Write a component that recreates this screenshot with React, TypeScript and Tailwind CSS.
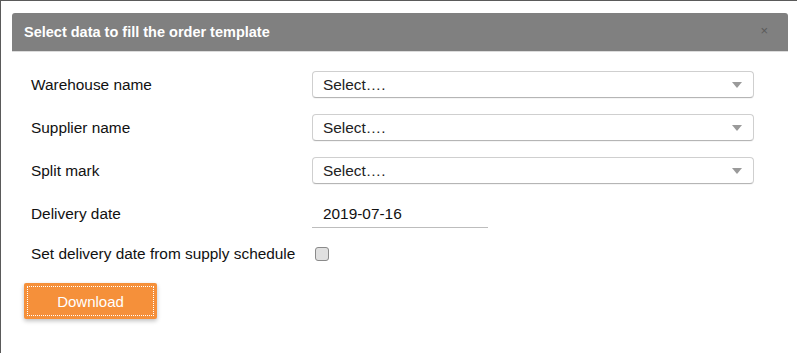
import React from "react";

function Caret() {
  return (
    <svg width="10" height="6" viewBox="0 0 10 6" className="block">
      <path d="M0 0 L10 0 L5 6 Z" fill="#9a9a9a" />
    </svg>
  );
}

function SelectBox() {
  return (
    <div className="flex items-center justify-between h-[27px] w-[442px] rounded-[4px] border border-[#cfcfcf] border-b-[#b5b5b5] bg-white pl-[10px] pr-[11px] shadow-[0_1px_0_rgba(0,0,0,0.04)]">
      <span className="text-[15.4px] text-[#222]">Select….</span>
      <Caret />
    </div>
  );
}

export default function App() {
  const labels = ["Warehouse name", "Supplier name", "Split mark"];
  return (
    <div
      className="w-[800px] h-[353px] bg-white relative overflow-hidden"
      style={{ fontFamily: '"Liberation Sans", Arial, sans-serif' }}
    >
      <div className="absolute left-0 top-0 w-[797px] h-px bg-[#5a5a5a]" />
      <div className="absolute left-0 top-0 w-px h-[353px] bg-[#5a5a5a]" />
      <div className="pt-[13px] pl-[12px] pr-[12px]">
        <div className="h-[39px] bg-[#808080] rounded-t-[3px] border-b border-[#dcdcdc] flex items-center justify-between pl-[12px] pr-[20px]">
          <span className="text-white font-bold text-[14.5px] pt-[2px]">Select data to fill the order template</span>
          <span className="text-[#5a5a5a] text-[13px] leading-none -mt-[3px]">×</span>
        </div>
        <div className="pl-[19px] pt-[19px] flex flex-col">
          {labels.map((l) => (
            <div key={l} className="flex items-center h-[27px] mb-[16px]">
              <span className="w-[281px] text-[15.4px] text-[#111]">{l}</span>
              <SelectBox />
            </div>
          ))}
          <div className="flex items-center h-[28px] mb-[15px]">
            <span className="w-[281px] text-[15.4px] text-[#111] -mt-[1px]">Delivery date</span>
            <div className="w-[176px] h-[28px] border-b border-[#bdbdbd] flex items-center pl-[11px]">
              <span className="text-[15.4px] text-[#111]">2019-07-16</span>
            </div>
          </div>
          <div className="flex items-center h-[22px]">
            <span className="text-[15.4px] text-[#111]">Set delivery date from supply schedule</span>
            <div className="ml-[20px] w-[14px] h-[14px] rounded-[3px] border border-[#8a8a8a] bg-[#e0e0e0]" />
          </div>
        </div>
        <div className="pl-[12px] mt-[18px]">
          <div className="w-[133px] h-[36px] bg-[#f5903a] rounded-[2px] shadow-[0_2px_4px_rgba(0,0,0,0.25)] p-[3px]">
            <div className="w-full h-full border border-dotted border-white flex items-center justify-center">
              <span className="text-white text-[15px] pt-[2px]">Download</span>
            </div>
          </div>
        </div>
      </div>
    </div>
  );
}
